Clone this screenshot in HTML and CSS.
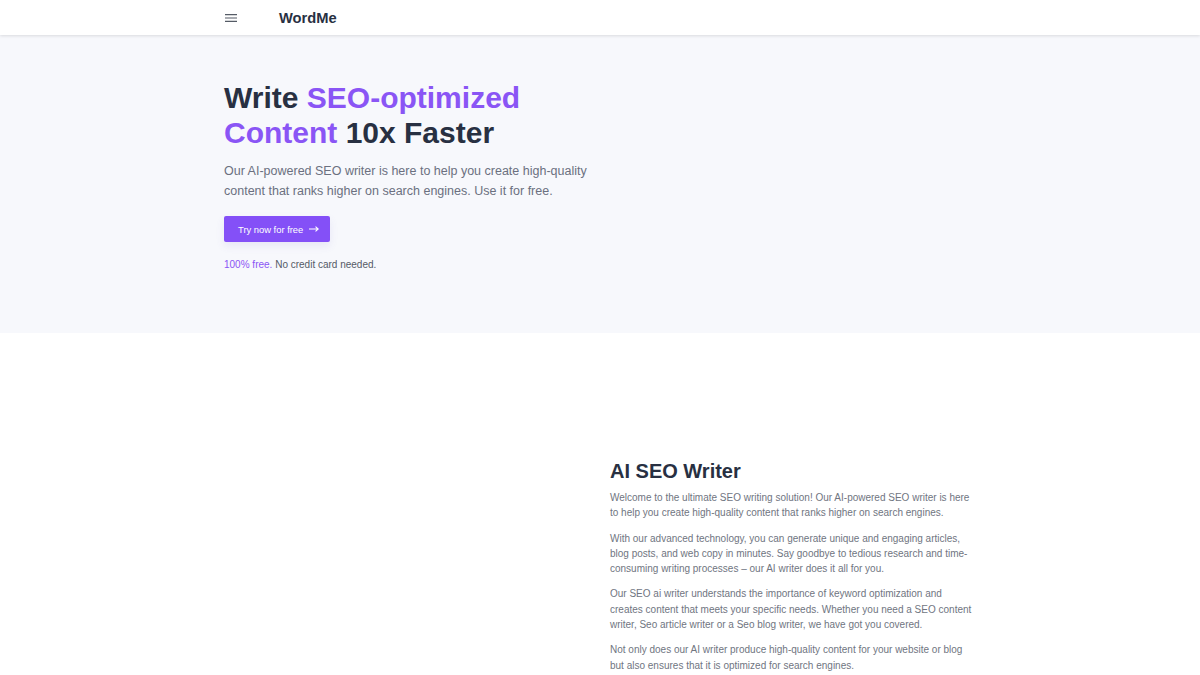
FILE: index.html
```html
<!DOCTYPE html>
<html>
<head>
    <title>WordMe - AI SEO Writer</title>
    <link rel="stylesheet" href="styles.css">
</head>
<body>
    <header class="topbar">
        <div class="container topbar-inner">
            <button class="menu-btn" type="button" aria-label="Menu">
                <svg width="12" height="8" viewBox="0 0 12 8">
                    <path d="M0 0.6h12M0 4h12M0 7.4h12" stroke="#555b66" stroke-width="1.1" fill="none"/>
                </svg>
            </button>
            <a class="brand" href="#">WordMe</a>
        </div>
    </header>

    <section class="hero">
        <div class="container">
            <h1 class="hero-title">Write <span class="accent">SEO-optimized Content</span> 10x Faster</h1>
            <p class="hero-text">Our AI-powered SEO writer is here to help you create high-quality content that ranks higher on search engines. Use it for free.</p>
            <a class="cta" href="#">Try now for free
                <svg class="arrow" width="10" height="6" viewBox="0 0 10 6">
                    <path d="M0 3h9M6.5 0.6L9.2 3L6.5 5.4" stroke="#fff" stroke-width="1.1" fill="none"/>
                </svg>
            </a>
            <p class="note"><span class="accent">100% free.</span> No credit card needed.</p>
        </div>
    </section>

    <section class="about">
        <div class="container about-grid">
            <div class="about-media"></div>
            <div class="about-copy">
                <h2>AI SEO Writer</h2>
                <p>Welcome to the ultimate SEO writing solution! Our AI-powered SEO writer is here to help you create high-quality content that ranks higher on search engines.</p>
                <p>With our advanced technology, you can generate unique and engaging articles, blog posts, and web copy in minutes. Say goodbye to tedious research and time-consuming writing processes – our AI writer does it all for you.</p>
                <p>Our SEO ai writer understands the importance of keyword optimization and creates content that meets your specific needs. Whether you need a SEO content writer, Seo article writer or a Seo blog writer, we have got you covered.</p>
                <p>Not only does our AI writer produce high-quality content for your website or blog but also ensures that it is optimized for search engines.</p>
            </div>
        </div>
    </section>
</body>
</html>
```

FILE: styles.css
```css
body {
    margin: 0;
    font-family: "Liberation Sans", Arial, sans-serif;
    color: #283042;
    background: #fff;
}

.container {
    width: 752px;
    margin: 0 auto;
}

.accent {
    color: #8a55f5;
}

/* top bar */
.topbar {
    background: #fff;
    height: 35px;
    box-shadow: 0 1px 3px rgba(0, 0, 0, 0.12);
    position: relative;
}

.topbar-inner {
    display: flex;
    align-items: center;
    height: 100%;
}

.menu-btn {
    border: none;
    background: none;
    padding: 0;
    margin-left: 1px;
    width: 12px;
    height: 8px;
    display: flex;
    cursor: pointer;
}

.brand {
    margin-left: 42px;
    font-size: 14.7px;
    font-weight: bold;
    color: #283042;
    text-decoration: none;
}

/* hero */
.hero {
    background: #f7f8fc;
    padding: 45px 0 62px;
}

.hero-title {
    margin: 0;
    font-size: 30px;
    line-height: 35px;
    font-weight: bold;
    width: 330px;
}

.hero-text {
    margin: 11px 0 0;
    width: 380px;
    font-size: 12.5px;
    line-height: 20px;
    color: #6b7080;
}

.cta {
    display: inline-flex;
    align-items: center;
    gap: 6px;
    margin-top: 15px;
    height: 26px;
    padding: 0 11px 0 14px;
    border-radius: 2px;
    background: #8450f7;
    color: #fff;
    font-size: 9.4px;
    text-decoration: none;
    box-shadow: 0 4px 8px rgba(100, 80, 200, 0.1);
}

.note {
    margin: 17px 0 0;
    font-size: 10px;
    line-height: 12px;
    color: #555a66;
}

/* about */
.about {
    padding: 126px 0 40px;
}

.about-grid {
    display: grid;
    grid-template-columns: 1fr 1fr;
    gap: 20px;
}

.about-copy h2 {
    margin: 0 0 7px;
    font-size: 20px;
    line-height: 24px;
}

.about-copy p {
    margin: 0 0 10px;
    font-size: 10px;
    line-height: 15.3px;
    color: #70757f;
}
```
